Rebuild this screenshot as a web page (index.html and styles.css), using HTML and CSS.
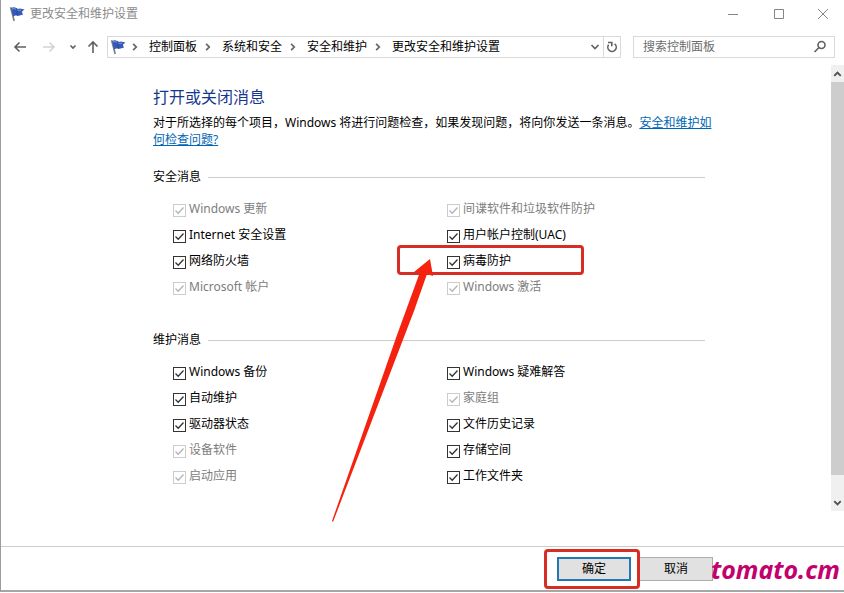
FILE: index.html
```html
<!DOCTYPE html>
<html lang="zh-CN">
<head>
<meta charset="utf-8">
<meta name="viewport" content="width=device-width, initial-scale=1">
<title>更改安全和维护设置</title>
<link rel="stylesheet" href="styles.css">
</head>
<body>
<svg class="defs" aria-hidden="true">
  <symbol id="flag" viewBox="0 0 16 16">
    <path d="M1.6 1.2 5.2 15" fill="none" stroke="#777d86" stroke-width="1.6"/>
    <path d="M2 2.2C4 .6 6 1 7.500 2.200 9 3.300 10 2.400 11 2.500L15.500 3.600 13 5.500 13.800 9.200C11 8.200 10.500 10.200 8.500 9.800 6.500 9.300 5.500 9.500 4.300 10.800Z" fill="#3459b8"/>
    <path d="M3 3.200C5 2 6 2.600 7.500 3.800 9 4.800 10 4 12 4.200" fill="none" stroke="#7f9fe6" stroke-width="1"/>
    <path d="M7.500 2.200 8.500 9.800" stroke="#25408f" stroke-width=".8"/>
  </symbol>
  <symbol id="chevron" viewBox="0 0 8 8"><path d="M2.500 1.500 5 4 2.500 6.500" fill="none" stroke="#666" stroke-width="1.400"/></symbol>
</svg>
<div class="window">
  <header class="titlebar">
    <svg class="flag"><use href="#flag"/></svg>
    <h1 class="title">更改安全和维护设置</h1>
    <div class="controls">
      <button type="button" aria-label="最小化"><svg viewBox="0 0 12 12"><path d="M1 6.500H11"/></svg></button>
      <button type="button" aria-label="最大化"><svg viewBox="0 0 12 12"><path d="M1.500 1.500H10.500V10.500H1.500Z"/></svg></button>
      <button type="button" aria-label="关闭"><svg viewBox="0 0 12 12"><path d="M1 1 11 11M11 1 1 11"/></svg></button>
    </div>
  </header>

  <div class="toolbar">
    <nav class="history" aria-label="导航">
      <button type="button" aria-label="后退"><svg viewBox="0 0 14 14"><path d="M13 7H2M6.500 2.500 2 7 6.500 11.500"/></svg></button>
      <button type="button" aria-label="前进" disabled><svg viewBox="0 0 14 14"><path d="M1 7H12M7.500 2.500 12 7 7.500 11.500"/></svg></button>
      <button type="button" class="recent" aria-label="最近位置"><svg viewBox="0 0 14 14"><path d="M4.500 5.500 7 8 9.500 5.500"/></svg></button>
      <button type="button" class="up" aria-label="向上"><svg viewBox="0 0 14 14"><path d="M7 13V2M2.500 6.500 7 2 11.500 6.500"/></svg></button>
    </nav>
    <div class="address">
      <svg class="flag"><use href="#flag"/></svg>
      <ol class="crumbs">
        <li><svg><use href="#chevron"/></svg><a href="#">控制面板</a></li>
        <li><svg><use href="#chevron"/></svg><a href="#">系统和安全</a></li>
        <li><svg><use href="#chevron"/></svg><a href="#">安全和维护</a></li>
        <li><svg><use href="#chevron"/></svg><a href="#">更改安全和维护设置</a></li>
      </ol>
      <button type="button" class="drop" aria-label="展开"><svg viewBox="0 0 14 14"><path d="M3.500 5 7 8.500 10.500 5"/></svg></button>
      <button type="button" class="refresh" aria-label="刷新"><svg viewBox="0 0 14 14"><path d="M3.600 4.800A4.200 4.200 0 1 0 9.600 3.900M3 2.500H6.800V6.300"/></svg></button>
    </div>
    <div class="search">
      <input type="search" aria-label="搜索控制面板" placeholder="搜索控制面板">
      <svg viewBox="0 0 14 14"><circle cx="8.500" cy="5" r="3.500"/><path d="M6 7.500 1.500 12"/></svg>
    </div>
  </div>

  <div class="viewport">
    <main class="content">
      <h2>打开或关闭消息</h2>
      <p class="intro">对于所选择的每个项目，Windows 将进行问题检查，如果发现问题，将向你发送一条消息。<a href="#">安全和维护如何检查问题?</a></p>

      <fieldset>
        <legend>安全消息</legend>
        <div class="options">
          <label><input type="checkbox" checked disabled><span>Windows 更新</span></label>
          <label><input type="checkbox" checked disabled><span>间谍软件和垃圾软件防护</span></label>
          <label><input type="checkbox" checked><span>Internet 安全设置</span></label>
          <label><input type="checkbox" checked><span>用户帐户控制(UAC)</span></label>
          <label><input type="checkbox" checked><span>网络防火墙</span></label>
          <label class="marked"><input type="checkbox" checked><span>病毒防护</span>
            <svg class="pointer" viewBox="0 0 104 266" aria-hidden="true"><path d="M99 2 83 15 89 15 66 78 1 264 2 265 83 54 96 17 102 19Z"/></svg>
          </label>
          <label><input type="checkbox" checked disabled><span>Microsoft 帐户</span></label>
          <label><input type="checkbox" checked disabled><span>Windows 激活</span></label>
        </div>
      </fieldset>

      <fieldset>
        <legend>维护消息</legend>
        <div class="options">
          <label><input type="checkbox" checked><span>Windows 备份</span></label>
          <label><input type="checkbox" checked><span>Windows 疑难解答</span></label>
          <label><input type="checkbox" checked><span>自动维护</span></label>
          <label><input type="checkbox" checked disabled><span>家庭组</span></label>
          <label><input type="checkbox" checked><span>驱动器状态</span></label>
          <label><input type="checkbox" checked><span>文件历史记录</span></label>
          <label><input type="checkbox" checked disabled><span>设备软件</span></label>
          <label><input type="checkbox" checked><span>存储空间</span></label>
          <label><input type="checkbox" checked disabled><span>启动应用</span></label>
          <label><input type="checkbox" checked><span>工作文件夹</span></label>
        </div>
      </fieldset>
    </main>
    <div class="scrollbar">
      <button type="button" aria-label="向上滚动"><svg viewBox="0 0 14 14"><path d="M3.500 9 7 5.500 10.500 9"/></svg></button>
      <div class="thumb"></div>
      <button type="button" aria-label="向下滚动"><svg viewBox="0 0 14 14"><path d="M3.500 5 7 8.500 10.500 5"/></svg></button>
    </div>
  </div>

  <footer class="actions">
    <div class="ok-frame"><button type="submit" class="ok">确定</button></div>
    <button type="button" class="cancel">取消</button>
    <span class="brand">tomato.cm</span>
  </footer>
</div>
</body>
</html>
```
FILE: styles.css
```css
*, *::before, *::after { box-sizing: border-box; }

body {
  margin: 0;
  background: #fff;
  color: #000;
  font: 12px/16px "Noto Sans", "Noto Sans CJK SC", sans-serif;
}

.defs { position: absolute; width: 0; height: 0; }

button {
  margin: 0;
  padding: 0;
  border: 0;
  background: none;
  font: inherit;
  color: inherit;
}

button svg {
  display: block;
  width: 14px;
  height: 14px;
  margin: auto;
  fill: none;
  stroke: #606060;
  stroke-width: 1.6;
}

.flag { width: 16px; height: 16px; flex: none; }

.window {
  display: flex;
  flex-direction: column;
  min-height: calc(100vh - 1px);
  border-left: 1px solid #9c9c9c;
  border-bottom: 2px solid #a6a6a6;
}

/* Title bar */
.titlebar {
  display: flex;
  align-items: center;
  gap: 5px;
  height: 28px;
  padding-left: 8px;
}

.title { margin: 0; font-size: 12px; font-weight: 400; color: #8c8c8c; }

.controls { display: flex; margin-left: auto; }
.controls button { width: 46px; height: 28px; }
.controls button:last-child { width: 42px; }
.controls svg { width: 12px; height: 12px; stroke: #858585; stroke-width: 1; }

/* Address row */
.toolbar {
  display: flex;
  align-items: center;
  margin-top: 8px;
  padding: 0 9px 0 8px;
}

.history { display: flex; align-items: center; width: 98px; padding-left: 4px; }
.history button { width: 29px; }
.history button svg { margin-left: 0; }
.history button.recent { width: 20px; margin-left: -5px; }
.history button.up { width: 20px; }
.history button:disabled svg { stroke: #d4d4d4; }

.address {
  display: flex;
  align-items: center;
  flex: 1;
  height: 22px;
  padding-left: 2px;
  border: 1px solid #d9d9d9;
}

.crumbs { display: flex; flex: 1; gap: 5px; margin: 0; padding: 0 0 0 3px; list-style: none; }
.crumbs li { display: flex; align-items: center; gap: 8px; white-space: nowrap; }
.crumbs li svg { width: 12px; height: 10px; }
.crumbs a { color: #000; text-decoration: none; }
.drop { width: 16px; height: 20px; }
.refresh { width: 17px; height: 20px; border-left: 1px solid #d9d9d9; }

.search {
  display: flex;
  align-items: center;
  width: 202px;
  height: 22px;
  margin-left: 12px;
  padding: 0 7px 0 9px;
  border: 1px solid #d9d9d9;
}

.search input {
  flex: 1;
  min-width: 0;
  padding: 0;
  border: 0;
  outline: 0;
  background: none;
  font: inherit;
}

.search input::placeholder { color: #6d6d6d; opacity: 1; }
.search svg { width: 14px; height: 14px; fill: none; stroke: #606060; stroke-width: 1.6; }

/* Page area */
.viewport { display: flex; margin-top: 7px; }

.content { flex: 1; min-width: 0; padding: 20px 112px 21px 152px; }

h2 { margin: 0; color: #15388c; font-size: 16px; line-height: 24px; font-weight: 400; }

.intro { margin: 5px 0 0; line-height: 17px; }
.intro a { color: #0066b4; }

fieldset { margin: 21px 14px 0 0; padding: 0; border: 0; min-width: 0; }
fieldset + fieldset { margin-top: 31px; }

legend { display: flex; align-items: center; gap: 7px; width: 100%; padding: 0; }
legend::after { content: ""; flex: 1; height: 1px; background: #ccc; }

.options {
  display: grid;
  grid-template-columns: 274px 1fr;
  padding: 12px 0 0 20px;
}

label { position: relative; display: flex; align-items: center; gap: 3px; height: 26px; }
label:has(:disabled) { color: #7d7d7d; }
label span { margin-top: -2px; }

label input {
  appearance: none;
  flex: none;
  width: 13px;
  height: 13px;
  margin: 0;
  border: 1px solid #333;
  background: url("data:image/svg+xml,%3Csvg xmlns='http://www.w3.org/2000/svg' viewBox='0 0 11 11'%3E%3Cpath d='M1.500 5.500 4.200 8.200 9.500 2.500' fill='none' stroke='%23333' stroke-width='1.300'/%3E%3C/svg%3E");
}

label input:disabled {
  border-color: #ccc;
  background-image: url("data:image/svg+xml,%3Csvg xmlns='http://www.w3.org/2000/svg' viewBox='0 0 11 11'%3E%3Cpath d='M1.500 5.500 4.200 8.200 9.500 2.500' fill='none' stroke='%23b4b4b4' stroke-width='1.300'/%3E%3C/svg%3E");
}

/* Callout drawn over the highlighted option */
.marked::after {
  content: "";
  position: absolute;
  left: -50px;
  top: -4px;
  width: 187px;
  height: 30px;
  border: 3px solid #d62d24;
  border-radius: 4px;
}

.pointer {
  position: absolute;
  z-index: 1;
  left: -116px;
  top: 8px;
  width: 104px;
  height: 266px;
  fill: #f4220f;
  pointer-events: none;
}

.scrollbar {
  display: flex;
  flex-direction: column;
  width: 13px;
  background: #f0f0f0;
}

.scrollbar button { height: 17px; }
.scrollbar svg { stroke: #505050; stroke-width: 2; width: 13px; }
.thumb { height: 393px; background: #cdcdcd; }
.scrollbar button:last-child { margin-top: auto; }

/* Footer */
.actions {
  display: flex;
  align-items: center;
  justify-content: flex-end;
  height: 44px;
  margin-top: auto;
  padding-right: 4px;
  border-top: 1px solid #ccc;
}

.ok-frame {
  z-index: 1;
  padding: 5px 6px 5px 10px;
  border: 3px solid #d62d24;
  border-radius: 4px;
}

.actions button { display: block; height: 24px; background: #e1e1e1; }
.ok { width: 74px; border: 2px solid #2477b3; }
.actions .cancel { width: 73px; border: 1px solid #adadad; border-left: 0; }

.brand {
  z-index: 1;
  margin-left: -2px;
  color: #c4006c;
  font: italic 700 25px/32px "Noto Sans", sans-serif;
}
```
